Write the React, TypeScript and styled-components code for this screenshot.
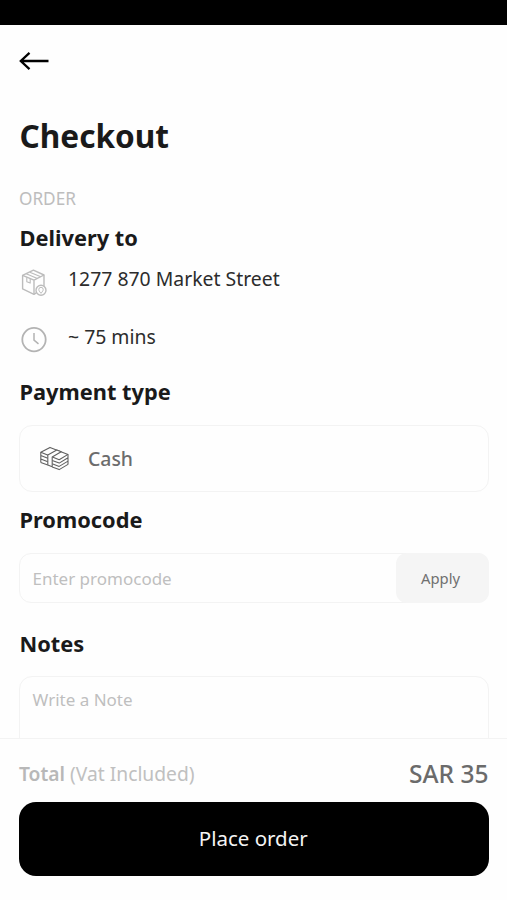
import React from 'react';
import styled, { createGlobalStyle } from 'styled-components';

const GlobalStyle = createGlobalStyle`
  * { box-sizing: border-box; }
  body { margin: 0; background: #fefefe; }
  input, textarea, button { font-family: inherit; letter-spacing: inherit; }
`;

const Screen = styled.div`
  width: 100%;
  height: 900px;
  display: flex;
  flex-direction: column;
  overflow: hidden;
  background: #fefefe;
  color: #1a1a1a;
  font-family: 'Noto Sans', sans-serif;
`;

const StatusBar = styled.div`
  flex: none;
  height: 25px;
  background: #000;
`;

const Header = styled.header`
  flex: none;
  height: 73px;
  padding: 0 19px 1px;
  display: flex;
  align-items: center;
`;

const IconButton = styled.button`
  display: flex;
  padding: 0;
  border: 0;
  background: none;
  color: #000;
`;

const Content = styled.main`
  flex: 1;
  min-height: 0;
  overflow: hidden;
  padding: 17px 19px 0 20px;
`;

const Title = styled.h1`
  margin: 0 0 0 -0.5px;
  font-size: 31.6px;
  line-height: 42px;
  font-weight: 700;
`;

const Eyebrow = styled.p`
  margin: 30px 0 0 -1px;
  font-size: 17.2px;
  line-height: 24px;
  color: #bdbdbd;
`;

const SectionTitle = styled.h2<{ $top: number }>`
  margin: ${(p) => p.$top}px 0 0 -0.5px;
  font-size: 21.8px;
  line-height: 30px;
  font-weight: 700;
`;

const InfoRow = styled.div`
  height: 58px;
  display: grid;
  grid-template-columns: 28px 1fr;
  column-gap: 20px;
  font-size: 19.4px;
  line-height: 52px;
  color: #2c2c2c;

  svg { margin-top: 15px; }
`;

const Card = styled.div`
  height: 67px;
  margin: 18px -1px 0 -1px;
  padding-left: 20px;
  display: flex;
  align-items: center;
  gap: 19px;
  border: 1px solid #f3f3f3;
  border-radius: 13px;
  font-size: 19.4px;
  font-weight: 500;
  color: #6c6c6c;
`;

const PromoField = styled.div`
  height: 50px;
  margin: 18px -1px 0 -1px;
  display: flex;
  border: 1px solid #f3f3f3;
  border-radius: 12px;
`;

const PromoInput = styled.input`
  flex: 1;
  min-width: 0;
  padding: 0 12.5px;
  border: 0;
  outline: 0;
  background: none;
  font-size: 17px;

  &::placeholder { color: #bfbfbf; opacity: 1; }
`;

const ApplyButton = styled.button`
  width: 93px;
  margin: -1px;
  padding: 0 4px 0 0;
  border: 0;
  border-radius: 11px;
  background: #f5f5f5;
  font-size: 14.8px;
  color: #707070;
`;

const NotesField = styled.textarea`
  display: block;
  width: calc(100% + 2px);
  height: 110px;
  margin: 17px 0 0 -1px;
  padding: 11px 12.5px;
  border: 1px solid #f3f3f3;
  border-radius: 13px;
  outline: 0;
  resize: none;
  background: none;
  font-size: 17px;
  line-height: 24px;

  &::placeholder { color: #bfbfbf; opacity: 1; }
`;

const Footer = styled.footer`
  flex: none;
  height: 162px;
  padding: 14px 18.5px 0 19px;
  border-top: 1px solid #f3f3f3;
  background: #fefefe;
`;

const TotalRow = styled.div`
  height: 40px;
  display: flex;
  align-items: center;
  justify-content: space-between;
`;

const TotalLabel = styled.span`
  font-size: 19.25px;
  color: #c0c0c0;

  strong { font-weight: 600; color: #b8b8b8; }
`;

const Amount = styled.span`
  font-size: 24.5px;
  font-weight: 500;
  color: #6b6b6b;
`;

const PlaceOrder = styled.button`
  display: block;
  width: 100%;
  height: 74px;
  margin-top: 9px;
  padding: 0 1px 2px 0;
  border: 0;
  border-radius: 17px;
  background: #000;
  color: #f4f4f4;
  font-size: 20.5px;
`;

const BackArrow = () => (
  <svg width="30" height="20" viewBox="0 0 30 20" fill="none" stroke="currentColor" strokeWidth="2.3">
    <path d="M29.5 10H2M10.5 1.8L1.8 10l8.7 8.2" />
  </svg>
);

const PackageIcon = () => (
  <svg width="28" height="29" viewBox="0 0 28 29" fill="none" stroke="#bcbcbc" strokeWidth="1.4" strokeLinejoin="round">
    <path d="M2.6 7.4L13.4 2.2 24 7v12.5L14 26.3 2.6 20.8z" />
    <path d="M2.6 7.4L14 12.2 24 7M14 12.2v14.1" />
    <path d="M6.2 5.8l11.2 4.8M9.8 4.2l11 4.6" strokeWidth="1.1" />
    <path d="M6.8 9.3v4.4l3.4 1.4v-4.4" strokeWidth="1.1" />
    <circle cx="21" cy="22.2" r="5" fill="#fefefe" />
    <path d="M21 25.3c-1.6-1.9-2.2-2.7-2.2-3.8a2.2 2.2 0 0 1 4.4 0c0 1.1-.6 1.9-2.2 3.8z" strokeWidth="1" />
  </svg>
);

const ClockIcon = () => (
  <svg width="28" height="28" viewBox="0 0 28 28" fill="none" stroke="#b3b3b3" strokeWidth="1.8">
    <circle cx="14" cy="13.6" r="11.7" />
    <path d="M14 7v7.2l4.5 3.7" strokeWidth="1.5" />
  </svg>
);

const CashIcon = () => (
  <svg width="29" height="25" viewBox="0 0 29 25" fill="none" stroke="#606060" strokeWidth="1.1" strokeLinejoin="round">
    <path d="M.8 6.2L10 1.4l18 7-8.8 5.4z" />
    <path d="M.8 6.2v10.2M.8 9.6l7 2.7M.8 13l7 2.7M.8 16.4l7 2.7" />
    <path d="M28 8.4v10M28 11.8l-8.8 5.3-7-2.7M28 15.1l-8.8 5.3-7-2.7M28 18.4l-8.8 5.2-7-2.7" />
    <path d="M7.8 8.9l9-4.8 4.4 1.7-9 5.2v9.8l-4.4-1.7z" fill="#fefefe" />
  </svg>
);

export default function App() {
  return (
    <>
      <GlobalStyle />
      <Screen>
        <StatusBar />
        <Header>
          <IconButton aria-label="Back">
            <BackArrow />
          </IconButton>
        </Header>
        <Content>
          <Title>Checkout</Title>
          <Eyebrow>ORDER</Eyebrow>
          <SectionTitle $top={12}>Delivery to</SectionTitle>
          <InfoRow>
            <PackageIcon />
            <span>1277 870 Market Street</span>
          </InfoRow>
          <InfoRow>
            <ClockIcon />
            <span>~ 75 mins</span>
          </InfoRow>
          <SectionTitle $top={8}>Payment type</SectionTitle>
          <Card>
            <CashIcon />
            <span>Cash</span>
          </Card>
          <SectionTitle $top={13}>Promocode</SectionTitle>
          <PromoField>
            <PromoInput placeholder="Enter promocode" />
            <ApplyButton>Apply</ApplyButton>
          </PromoField>
          <SectionTitle $top={26}>Notes</SectionTitle>
          <NotesField placeholder="Write a Note" />
        </Content>
        <Footer>
          <TotalRow>
            <TotalLabel>
              <strong>Total</strong> (Vat Included)
            </TotalLabel>
            <Amount>SAR 35</Amount>
          </TotalRow>
          <PlaceOrder>Place order</PlaceOrder>
        </Footer>
      </Screen>
    </>
  );
}
